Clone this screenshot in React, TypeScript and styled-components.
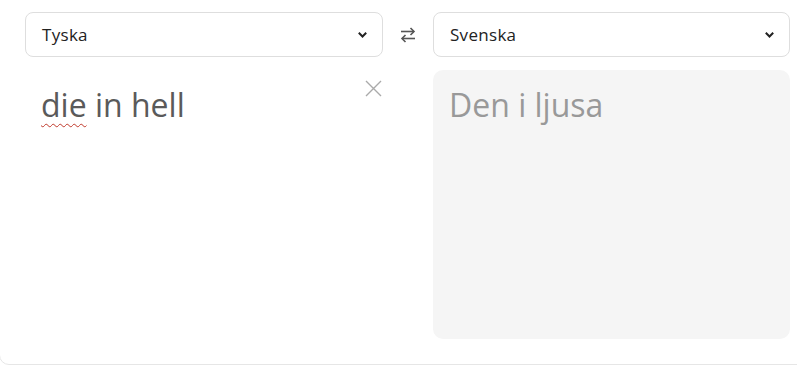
import React from "react";
import styled, { createGlobalStyle } from "styled-components";

const Global = createGlobalStyle`
  html, body { margin: 0; padding: 0; background: #fff; overflow: hidden; }
  body { font-family: "Open Sans", Lato, sans-serif; }
`;

const Card = styled.div`
  box-sizing: border-box;
  width: 840px;
  margin-top: -20px;
  margin-left: -1px;
  padding: 31px 50px 25px 25px;
  border: 1px solid #e6e6e6;
  border-radius: 10px;
  background: #fff;
  display: grid;
  grid-template-columns: 358px 50px 357px;
  grid-template-rows: 45px 269px;
  row-gap: 13px;
`;

const Select = styled.div`
  box-sizing: border-box;
  height: 45px;
  border: 1px solid #dedede;
  border-radius: 8px;
  display: flex;
  align-items: center;
  justify-content: space-between;
  padding: 0 14px 0 16px;
  font-size: 17px;
  letter-spacing: 0.3px;
  color: #222;
`;

const SwapCell = styled.div`
  display: flex;
  align-items: center;
  justify-content: center;
  color: #555;
`;

const SourcePane = styled.div`
  position: relative;
  padding: 9px 15px 9px 16px;
`;

const TargetPane = styled.div`
  background: #f5f5f5;
  border-radius: 10px;
  padding: 9px 15px 9px 16px;
`;

const BigText = styled.div<{ $muted?: boolean }>`
  font-size: 32px;
  line-height: 51px;
  color: ${(p) => (p.$muted ? "#999" : "#5a5a5a")};
`;

const Misspelled = styled.span`
  text-decoration: underline wavy #c0392b;
  text-decoration-thickness: 1px;
  text-underline-offset: 6px;
`;

const ClearButton = styled.button`
  position: absolute;
  top: 9px;
  right: 1px;
  width: 18px;
  height: 18px;
  padding: 0;
  border: none;
  background: none;
  color: #aaa;
  display: flex;
  align-items: center;
  justify-content: center;
`;

const Chevron = () => (
  <svg width="11" height="8" viewBox="0 0 11 8">
    <path d="M1.8 1.8 L5.5 5.5 L9.2 1.8" fill="none" stroke="#222" strokeWidth="2" />
  </svg>
);

const SwapIcon = () => (
  <svg width="18" height="18" viewBox="0 0 18 18">
    <g fill="none" stroke="#555" strokeWidth="1.6">
      <path d="M2 5.5 H15" />
      <path d="M11.5 2 L15 5.5 L11.5 9" />
      <path d="M16 12.5 H3" />
      <path d="M6.5 9 L3 12.5 L6.5 16" />
    </g>
  </svg>
);

const CloseIcon = () => (
  <svg width="17" height="17" viewBox="0 0 17 17">
    <path d="M1 1 L16 16 M16 1 L1 16" stroke="#aaa" strokeWidth="1.4" fill="none" />
  </svg>
);

export default function App() {
  return (
    <>
      <Global />
      <Card>
        <Select>
          <span>Tyska</span>
          <Chevron />
        </Select>
        <SwapCell>
          <SwapIcon />
        </SwapCell>
        <Select>
          <span>Svenska</span>
          <Chevron />
        </Select>
        <SourcePane>
          <BigText>
            <Misspelled>die</Misspelled> in hell
          </BigText>
          <ClearButton aria-label="Rensa">
            <CloseIcon />
          </ClearButton>
        </SourcePane>
        <div />
        <TargetPane>
          <BigText $muted>Den i ljusa</BigText>
        </TargetPane>
      </Card>
    </>
  );
}
